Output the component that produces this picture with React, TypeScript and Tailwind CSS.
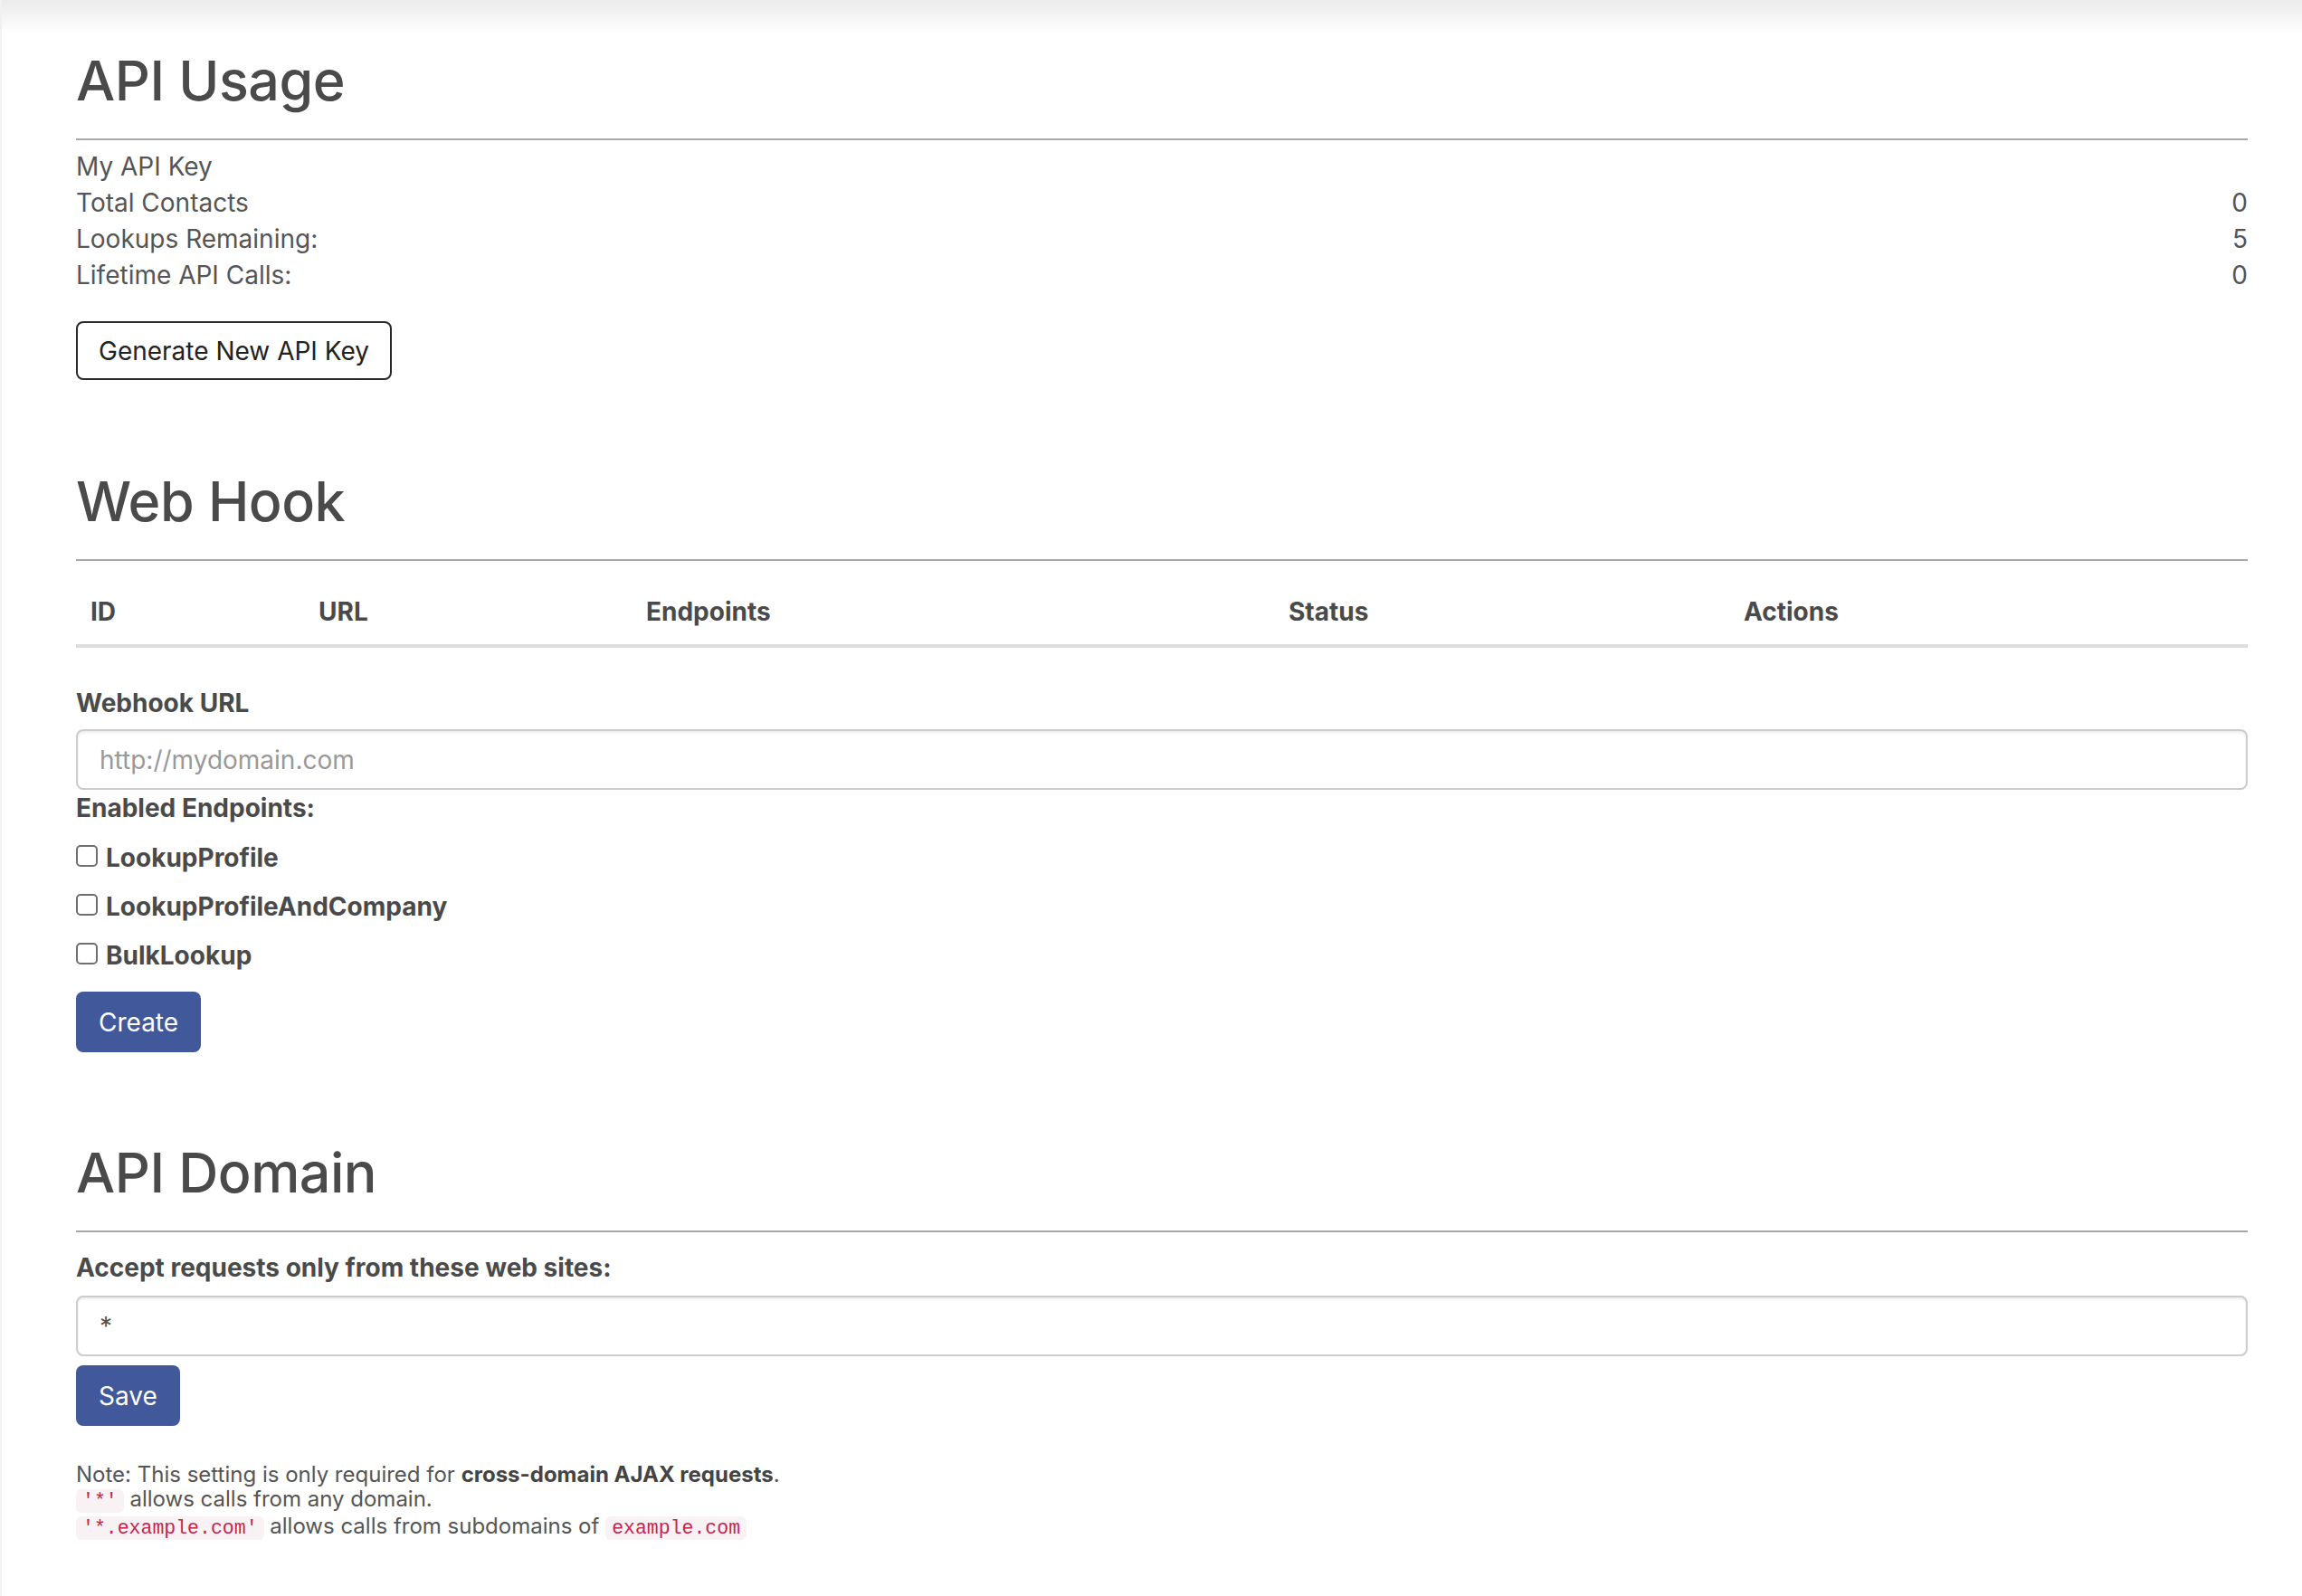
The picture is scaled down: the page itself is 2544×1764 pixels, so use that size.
import React from "react";

const stats = [
  { label: "My API Key", value: "" },
  { label: "Total Contacts", value: "0" },
  { label: "Lookups Remaining:", value: "5" },
  { label: "Lifetime API Calls:", value: "0" },
];

const endpoints = ["LookupProfile", "LookupProfileAndCompany", "BulkLookup"];

function SectionTitle({ children }: { children: React.ReactNode }) {
  return (
    <div>
      <h2 className="text-[61px] leading-[68px] font-medium text-[#4a4a4a] tracking-[-0.5px]">
        {children}
      </h2>
      <div className="mt-[30px] h-[2px] bg-[#a8a8a8]" />
    </div>
  );
}

function Code({ children }: { children: React.ReactNode }) {
  return (
    <code className="bg-[#f9f2f4] text-[#c7254e] rounded-[6px] px-[7px] py-[1px] text-[21.5px] font-['Liberation_Mono',monospace]">
      {children}
    </code>
  );
}

export default function App() {
  return (
    <div className="min-h-screen bg-white bg-[linear-gradient(to_bottom,#ebebeb_0px,#ffffff_38px)] border-l-2 border-[#f1f1f1] pl-[82px] pr-[60px] pt-[55px] pb-[80px] font-['Inter','Noto_Sans',sans-serif] text-[#555]">
      {/* API Usage */}
      <section>
        <SectionTitle>API Usage</SectionTitle>
        <div className="mt-[9px] text-[28px] leading-[40px]">
          {stats.map((s) => (
            <div key={s.label} className="flex justify-between">
              <span>{s.label}</span>
              <span>{s.value}</span>
            </div>
          ))}
        </div>
        <button className="mt-[31px] h-[65px] px-[23px] border-2 border-[#2a2a2a] rounded-[8px] text-[28px] text-[#222] bg-white">
          Generate New API Key
        </button>
      </section>

      {/* Web Hook */}
      <section className="mt-[100px]">
        <SectionTitle>Web Hook</SectionTitle>
        <div className="mt-[20px] grid grid-cols-[252px_362px_710px_503px_1fr] border-b-4 border-[#dddddd] text-[28px] leading-[40px] font-bold text-[#4a4a4a]">
          {["ID", "URL", "Endpoints", "Status", "Actions"].map((h) => (
            <div key={h} className="px-[16px] py-[16px]">
              {h}
            </div>
          ))}
        </div>

        <div className="mt-[41px] text-[28px] leading-[40px] font-bold text-[#4a4a4a]">
          Webhook URL
        </div>
        <input
          className="mt-[9px] block w-full h-[67px] px-[24px] border-2 border-[#cccccc] rounded-[8px] text-[28px] text-[#555] placeholder:text-[#999] shadow-[inset_0_2px_3px_rgba(0,0,0,0.08)] outline-none"
          placeholder="http://mydomain.com"
        />
        <div className="text-[28px] leading-[40px] font-bold text-[#4a4a4a]">
          Enabled Endpoints:
        </div>
        <div className="mt-[15px] flex flex-col gap-[14px]">
          {endpoints.map((e) => (
            <label key={e} className="flex items-center gap-[9px] text-[28px] leading-[40px] font-bold text-[#4a4a4a]">
              <span className="w-[24px] h-[24px] -mt-[5px] border-2 border-[#6f6f6f] rounded-[5px] bg-white" />
              {e}
            </label>
          ))}
        </div>
        <button className="mt-[20px] h-[67px] px-[25px] bg-[#41599a] rounded-[8px] text-[28px] text-white">
          Create
        </button>
      </section>

      {/* API Domain */}
      <section className="mt-[99px]">
        <SectionTitle>API Domain</SectionTitle>
        <div className="mt-[19px] text-[28px] leading-[40px] font-bold text-[#4a4a4a]">
          Accept requests only from these web sites:
        </div>
        <input
          className="mt-[11px] block w-full h-[67px] px-[24px] border-2 border-[#cccccc] rounded-[8px] text-[28px] text-[#555] shadow-[inset_0_2px_3px_rgba(0,0,0,0.08)] outline-none"
          defaultValue="*"
        />
        <button className="mt-[10px] h-[67px] px-[25px] bg-[#41599a] rounded-[8px] text-[28px] text-white">
          Save
        </button>
        <div className="mt-[40px] text-[24px] leading-[27px]">
          <div>
            Note: This setting is only required for{" "}
            <strong className="font-bold text-[#444]">cross-domain AJAX requests</strong>.
          </div>
          <div>
            <Code>'*'</Code> allows calls from any domain.
          </div>
          <div>
            <Code>'*.example.com'</Code> allows calls from subdomains of <Code>example.com</Code>
          </div>
        </div>
      </section>
    </div>
  );
}
